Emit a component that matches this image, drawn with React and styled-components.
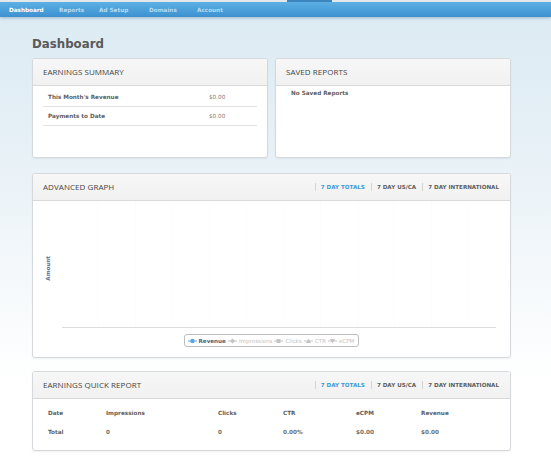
import React from "react";
import styled, { createGlobalStyle } from "styled-components";

const GlobalStyle = createGlobalStyle`
  html, body {
    margin: 0;
    padding: 0;
  }
  body {
    min-height: 456px;
    background: linear-gradient(#dbeaf3 0px, #e6f0f6 140px, #f7fafc 300px, #ffffff 380px);
    font-family: "DejaVu Sans", Verdana, sans-serif;
    color: #606060;
  }
`;

const TopBar = styled.div`
  display: flex;
  flex-direction: column;
  box-shadow: 0 1px 3px rgba(40, 90, 130, 0.35);
`;

const TopStrip = styled.div`
  display: flex;
  height: 2px;
  background: #e4e8eb;
`;

const StripMarker = styled.div`
  margin-left: 287px;
  width: 45px;
  background: #3c86bf;
`;

const Nav = styled.nav`
  display: flex;
  align-items: center;
  height: 15px;
  padding-left: 9px;
  background: linear-gradient(#5cb0e4, #3d91d0);
`;

const NavItem = styled.span`
  font-size: 5.7px;
  font-weight: bold;
  color: ${(p) => (p.active ? "#ffffff" : "#b9daf1")};
  width: ${(p) => p.w}px;
`;

const Page = styled.div`
  display: flex;
  flex-direction: column;
  width: 479px;
  padding: 0 0 6px 32px;
`;

const Title = styled.h1`
  margin: 18px 0 5px;
  height: 18px;
  line-height: 18px;
  font-size: 11.8px;
  font-weight: bold;
  color: #5a5a5a;
`;

const Row = styled.div`
  display: flex;
  gap: 7px;
`;

const Panel = styled.section`
  display: flex;
  flex-direction: column;
  flex: ${(p) => (p.grow ? "1 1 0" : "none")};
  height: ${(p) => p.h}px;
  margin-top: ${(p) => p.mt || 0}px;
  background: #fff;
  border: 1px solid #d6d9db;
  border-radius: 3px;
  box-shadow: 0 1px 2px rgba(0, 0, 0, 0.06);
  box-sizing: border-box;
  overflow: hidden;
`;

const PanelHeader = styled.header`
  display: flex;
  align-items: center;
  justify-content: space-between;
  height: 27px;
  flex: none;
  padding: 0 11px 0 10px;
  background: linear-gradient(#f7f7f7, #f1f1f1);
  border-bottom: 1px solid #d9d9d9;
  box-sizing: border-box;
`;

const PanelTitle = styled.h2`
  margin: 0 0 2px;
  font-family: "Open Sans", "DejaVu Sans", sans-serif;
  font-size: 8px;
  font-weight: normal;
  color: #444;
  letter-spacing: 0.05px;
`;

const Tabs = styled.div`
  display: flex;
  align-items: center;
`;

const Tab = styled.span`
  display: flex;
  align-items: center;
  height: 8px;
  padding: 0 6px 0 5px;
  border-left: 1px solid #d4d4d4;
  font-size: 5.6px;
  font-weight: bold;
  color: ${(p) => (p.active ? "#3c9ad9" : "#5e5e5e")};
  &:last-child {
    padding-right: 0;
  }
`;

const SummaryList = styled.div`
  display: flex;
  flex-direction: column;
  padding: 2px 10px 0;
`;

const SummaryRow = styled.div`
  display: grid;
  grid-template-columns: 161px 1fr;
  align-items: center;
  height: 18px;
  padding-left: 5px;
  border-bottom: 1px solid #e3e3e3;
  font-size: 5.7px;
`;

const Label = styled.span`
  font-weight: bold;
  color: #606060;
`;

const Value = styled.span`
  color: #808080;
`;

const Empty = styled.div`
  padding: 4px 15px;
  font-size: 5.7px;
  font-weight: bold;
  color: #606060;
`;

const GraphBody = styled.div`
  display: flex;
  flex-direction: column;
  align-items: center;
  flex: 1;
  padding: 0 14px 0 0;
`;

const PlotRow = styled.div`
  display: flex;
  align-self: stretch;
  height: 127px;
`;

const YLabel = styled.div`
  display: flex;
  align-items: center;
  justify-content: center;
  width: 29px;
  padding-top: 8px;
  box-sizing: border-box;
  span {
    writing-mode: vertical-rl;
    transform: rotate(180deg);
    font-size: 5.6px;
    font-weight: bold;
    color: #56739a;
  }
`;

const Plot = styled.div`
  flex: 1;
  border-bottom: 1px solid #dcdcdc;
  background: repeating-linear-gradient(
    90deg,
    transparent 0,
    transparent 36px,
    #fcfcfc 36px,
    #fcfcfc 37px
  );
`;

const Legend = styled.div`
  display: flex;
  align-items: center;
  gap: 2px;
  margin-top: 6px;
  margin-left: 14px;
  height: 13px;
  padding: 0 4px 0 3px;
  border: 1px solid #bdbdbd;
  border-radius: 3px;
  box-sizing: border-box;
`;

const LegendItem = styled.span`
  display: flex;
  align-items: center;
  gap: 2px;
  font-size: 5.6px;
  font-weight: ${(p) => (p.on ? "bold" : "normal")};
  color: ${(p) => (p.on ? "#556575" : "#c4c4c4")};
`;

const Marker = ({ shape, color }) => (
  <svg width="9" height="6" viewBox="0 0 9 6">
    <line x1="0" y1="3" x2="9" y2="3" stroke={color} strokeWidth="1.2" />
    {shape === "circle" && <circle cx="4.5" cy="3" r="2.2" fill={color} />}
    {shape === "diamond" && <path d="M4.5 0.5 L7 3 L4.5 5.5 L2 3 Z" fill={color} />}
    {shape === "square" && <rect x="2.5" y="1" width="4" height="4" fill={color} />}
    {shape === "triangle" && <path d="M4.5 0.5 L7 5 L2 5 Z" fill={color} />}
    {shape === "triangle-down" && <path d="M2 1 L7 1 L4.5 5.5 Z" fill={color} />}
  </svg>
);

const Table = styled.div`
  display: grid;
  grid-template-columns: 58px 112px 65px 73px 65px 1fr;
  grid-auto-rows: 19px;
  align-items: center;
  padding: 4px 15px 0;
  font-size: 5.7px;
  font-weight: bold;
`;

const Cell = styled.span`
  color: ${(p) => (p.num ? "#707070" : "#606060")};
`;

const navItems = [
  { label: "Dashboard", w: 50 },
  { label: "Reports", w: 40 },
  { label: "Ad Setup", w: 50 },
  { label: "Domains", w: 48 },
  { label: "Account", w: 48 },
];

const tabs = ["7 DAY TOTALS", "7 DAY US/CA", "7 DAY INTERNATIONAL"];

const legend = [
  { label: "Revenue", shape: "circle", on: true },
  { label: "Impressions", shape: "diamond" },
  { label: "Clicks", shape: "square" },
  { label: "CTR", shape: "triangle" },
  { label: "eCPM", shape: "triangle-down" },
];

function TabList() {
  return (
    <Tabs>
      {tabs.map((t, i) => (
        <Tab key={t} active={i === 0}>
          {t}
        </Tab>
      ))}
    </Tabs>
  );
}

export default function App() {
  return (
    <>
      <GlobalStyle />
      <TopBar>
        <TopStrip>
          <StripMarker />
        </TopStrip>
        <Nav>
          {navItems.map((n, i) => (
            <NavItem key={n.label} w={n.w} active={i === 0}>
              {n.label}
            </NavItem>
          ))}
        </Nav>
      </TopBar>
      <Page>
        <Title>Dashboard</Title>
        <Row>
          <Panel grow h={100}>
            <PanelHeader>
              <PanelTitle>EARNINGS SUMMARY</PanelTitle>
            </PanelHeader>
            <SummaryList>
              <SummaryRow>
                <Label>This Month's Revenue</Label>
                <Value>$0.00</Value>
              </SummaryRow>
              <SummaryRow>
                <Label>Payments to Date</Label>
                <Value>$0.00</Value>
              </SummaryRow>
            </SummaryList>
          </Panel>
          <Panel grow h={100}>
            <PanelHeader>
              <PanelTitle>SAVED REPORTS</PanelTitle>
            </PanelHeader>
            <Empty>No Saved Reports</Empty>
          </Panel>
        </Row>
        <Panel h={185} mt={15}>
          <PanelHeader>
            <PanelTitle>ADVANCED GRAPH</PanelTitle>
            <TabList />
          </PanelHeader>
          <GraphBody>
            <PlotRow>
              <YLabel>
                <span>Amount</span>
              </YLabel>
              <Plot />
            </PlotRow>
            <Legend>
              {legend.map((l) => (
                <LegendItem key={l.label} on={l.on}>
                  <Marker shape={l.shape} color={l.on ? "#5aa6e0" : "#c4c4c4"} />
                  {l.label}
                </LegendItem>
              ))}
            </Legend>
          </GraphBody>
        </Panel>
        <Panel h={80} mt={13}>
          <PanelHeader>
            <PanelTitle>EARNINGS QUICK REPORT</PanelTitle>
            <TabList />
          </PanelHeader>
          <Table>
            <Cell>Date</Cell>
            <Cell>Impressions</Cell>
            <Cell>Clicks</Cell>
            <Cell>CTR</Cell>
            <Cell>eCPM</Cell>
            <Cell>Revenue</Cell>
            <Cell>Total</Cell>
            <Cell num>0</Cell>
            <Cell num>0</Cell>
            <Cell num>0.00%</Cell>
            <Cell num>$0.00</Cell>
            <Cell num>$0.00</Cell>
          </Table>
        </Panel>
      </Page>
    </>
  );
}
